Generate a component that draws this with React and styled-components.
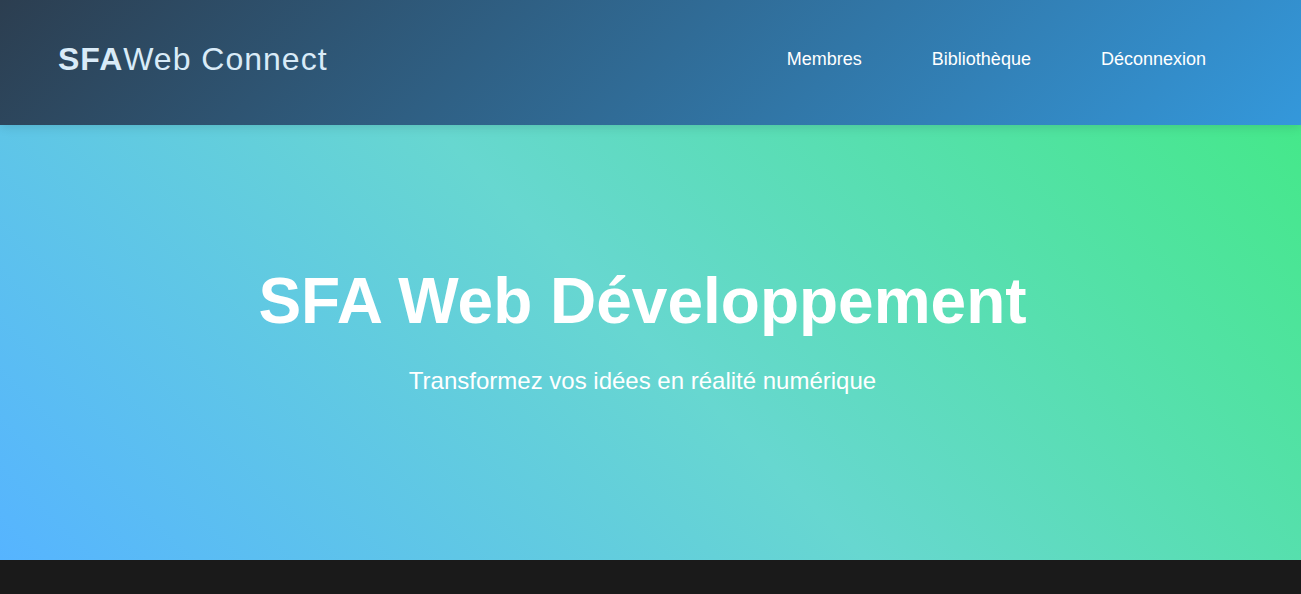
import styled, { createGlobalStyle } from 'styled-components'

const GlobalStyle = createGlobalStyle`
  * {
    box-sizing: border-box;
  }
  html, body {
    margin: 0;
    padding: 0;
  }
  body {
    font-family: "Liberation Sans", Arial, sans-serif;
    background: #1a1a1a;
  }
  ::-webkit-scrollbar {
    width: 10px;
  }
  ::-webkit-scrollbar-track {
    background: #ffffff;
  }
  ::-webkit-scrollbar-thumb {
    background: #d1dae2;
    border-left: 4px solid #ffffff;
  }
`;

const Header = styled.header`
  position: relative;
  z-index: 2;
  height: 125px;
  display: flex;
  align-items: center;
  justify-content: space-between;
  padding: 0 75px 7px 58px;
  background: linear-gradient(135deg, #2c3e50 0%, #3498db 100%);
  box-shadow: 0 2px 10px rgba(0, 0, 0, 0.12);
`;

const Logo = styled.div`
  font-size: 32px;
  letter-spacing: 1px;
  color: #d9ebf8;
`;

const LogoStrong = styled.span`
  font-weight: 700;
`;

const Nav = styled.nav`
  display: flex;
  gap: 30px;
`;

const NavLink = styled.a`
  padding: 8px 20px;
  font-size: 18px;
  color: #ffffff;
  text-decoration: none;
  cursor: pointer;
`;

const Hero = styled.section`
  height: 435px;
  display: flex;
  flex-direction: column;
  align-items: center;
  justify-content: center;
  padding: 0 16px 26px 0;
  background: linear-gradient(45deg, #56b4ff 0%, #67d7d0 50%, #45e88a 100%);
  color: #ffffff;
  text-align: center;
`;

const Title = styled.h1`
  margin: 0 0 26px;
  font-size: 64px;
  font-weight: 700;
  line-height: 1.2;
`;

const Subtitle = styled.p`
  margin: 0;
  font-size: 24px;
  line-height: 1.3;
`;

const Footer = styled.section`
  height: 786px;
  background: #1a1a1a;
`;

function App() {
  const links = ['Membres', 'Bibliothèque', 'Déconnexion'];

  return (
    <>
      <GlobalStyle />
      <Header>
        <Logo>
          <LogoStrong>SFA</LogoStrong>Web Connect
        </Logo>
        <Nav>
          {links.map((l) => (
            <NavLink key={l}>{l}</NavLink>
          ))}
        </Nav>
      </Header>
      <Hero>
        <Title>SFA Web Développement</Title>
        <Subtitle>Transformez vos idées en réalité numérique</Subtitle>
      </Hero>
      <Footer />
    </>
  );
}

export default App;
